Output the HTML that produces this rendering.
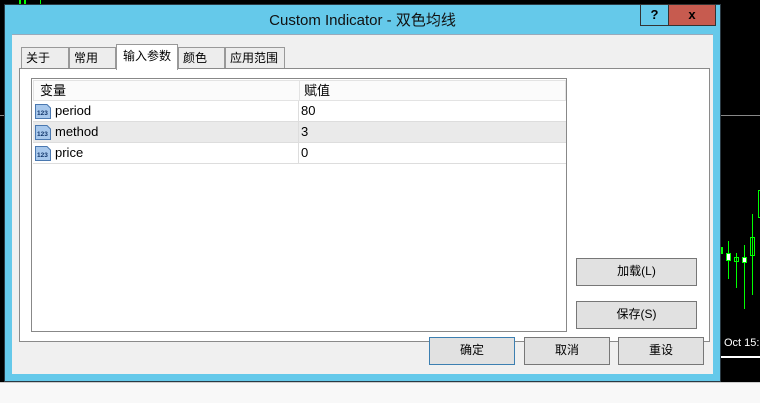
<!DOCTYPE html>
<html><head><meta charset="utf-8"><style>
*{margin:0;padding:0;box-sizing:border-box}
body{width:760px;height:403px;background:#000;position:relative;overflow:hidden;font-family:"Liberation Sans","Noto Sans CJK SC",sans-serif;font-size:12px;color:#000}
.a{position:absolute;white-space:nowrap}
.btn{position:absolute;background:#e1e1e1;border:1px solid #adadad;text-align:center;line-height:25px;font-size:12px}
.tab{position:absolute;background:#ededed;border:1px solid #999;border-bottom:none;line-height:20px;padding-left:4px;font-size:12px}
.row{position:absolute;left:1px;width:533px;height:21px;border-bottom:1px solid #ddd;line-height:20px;font-size:13px}
.row .n{position:absolute;left:22px}
.row .v{position:absolute;left:268px}
.row .d{position:absolute;left:265px;top:0;width:1px;height:20px;background:#ddd}
.ic{position:absolute;left:2px;top:3px}
.g{position:absolute;background:#0f0}
</style></head><body>
<div class="g" style="left:19px;top:0;width:2px;height:4px"></div>
<div class="g" style="left:24px;top:0;width:2px;height:4px"></div>
<div class="g" style="left:40px;top:0;width:1px;height:4px"></div>
<div class="a" style="left:0;top:115px;width:4px;height:1px;background:#888"></div>
<div class="a" style="left:720px;top:115px;width:40px;height:1px;background:#888"></div>
<div class="g" style="left:721px;top:247px;width:2px;height:7px"></div>
<div class="g" style="left:728px;top:241px;width:1px;height:38px"></div>
<div class="a" style="left:726px;top:253px;width:5px;height:8px;border:1px solid #0f0;background:#fff"></div>
<div class="g" style="left:736px;top:253px;width:1px;height:35px"></div>
<div class="a" style="left:734px;top:257px;width:5px;height:5px;border:1px solid #0f0"></div>
<div class="g" style="left:744px;top:245px;width:1px;height:64px"></div>
<div class="a" style="left:742px;top:257px;width:5px;height:6px;border:1px solid #0f0;background:#fff"></div>
<div class="g" style="left:752px;top:214px;width:1px;height:81px"></div>
<div class="a" style="left:750px;top:237px;width:5px;height:19px;border:1px solid #0f0"></div>
<div class="a" style="left:758px;top:190px;width:2px;height:28px;border:1px solid #0f0;border-right:none"></div>
<div class="a" style="left:724px;top:337px;color:#fff;font-size:11px">Oct 15:3</div>
<div class="a" style="left:721px;top:356px;width:39px;height:2px;background:#fff"></div>
<div class="a" style="left:0;top:382px;width:760px;height:21px;background:#f8f8f8;border-top:1px solid #ccc"></div>
<div class="a" style="left:4px;top:4px;width:717px;height:378px;background:#65c9ea;border:1px solid #2a3a44"></div>
<div class="a" style="left:5px;top:9px;width:715px;text-align:center;font-size:15px;color:#111">Custom Indicator - 双色均线</div>
<div class="a" style="left:640px;top:4px;width:29px;height:22px;border:1px solid #333;background:#65c9ea;text-align:center;font-weight:bold;font-size:13px;line-height:20px">?</div>
<div class="a" style="left:668px;top:4px;width:48px;height:22px;border:1px solid #333;background:#c75b4f;text-align:center;font-weight:bold;font-size:13px;line-height:20px">x</div>
<div class="a" style="left:12px;top:34px;width:701px;height:340px;background:#f0f0f0;border-top:1px solid #9ab"></div>
<div class="a" style="left:19px;top:68px;width:691px;height:274px;background:#fff;border:1px solid #8a8a8a"></div>
<div class="tab" style="left:21px;top:47px;width:48px;height:21px">关于</div>
<div class="tab" style="left:69px;top:47px;width:47px;height:21px">常用</div>
<div class="tab" style="left:178px;top:47px;width:47px;height:21px">颜色</div>
<div class="tab" style="left:225px;top:47px;width:60px;height:21px">应用范围</div>
<div class="tab" style="left:116px;top:44px;width:62px;height:26px;background:#fff;line-height:22px;padding-left:6px">输入参数</div>
<div class="a" style="left:31px;top:78px;width:536px;height:254px;background:#fff;border:1px solid #888">
  <div class="row" style="top:1px;height:21px;background:#fbfbfb;border:1px solid #e3e3e3;line-height:19px"><span class="a" style="left:6px">变量</span><span class="d" style="left:265px;background:#e3e3e3;height:19px"></span><span class="a" style="left:270px">赋值</span></div>
  <div class="row" style="top:22px;background:#fff"><svg class="ic" width="16" height="15" viewBox="0 0 16 15"><path d="M0.5 0.5H12l3.5 3.5V14.5H0.5Z" fill="#a8c8ec" stroke="#4a78b0"/><text x="2" y="11" font-size="6.5" font-weight="bold" fill="#12366b" font-family="Liberation Sans">123</text></svg><span class="n">period</span><span class="d"></span><span class="v">80</span></div>
  <div class="row" style="top:43px;background:#eaeaea"><svg class="ic" width="16" height="15" viewBox="0 0 16 15"><path d="M0.5 0.5H12l3.5 3.5V14.5H0.5Z" fill="#a8c8ec" stroke="#4a78b0"/><text x="2" y="11" font-size="6.5" font-weight="bold" fill="#12366b" font-family="Liberation Sans">123</text></svg><span class="n">method</span><span class="d"></span><span class="v">3</span></div>
  <div class="row" style="top:64px;background:#fff"><svg class="ic" width="16" height="15" viewBox="0 0 16 15"><path d="M0.5 0.5H12l3.5 3.5V14.5H0.5Z" fill="#a8c8ec" stroke="#4a78b0"/><text x="2" y="11" font-size="6.5" font-weight="bold" fill="#12366b" font-family="Liberation Sans">123</text></svg><span class="n">price</span><span class="d"></span><span class="v">0</span></div>
</div>
<div class="btn" style="left:576px;top:258px;width:121px;height:28px;border-color:#777">加载(L)</div>
<div class="btn" style="left:576px;top:301px;width:121px;height:28px;border-color:#777">保存(S)</div>
<div class="btn" style="left:429px;top:337px;width:86px;height:28px;border-color:#3c7fb1">确定</div>
<div class="btn" style="left:524px;top:337px;width:86px;height:28px;border-color:#777">取消</div>
<div class="btn" style="left:618px;top:337px;width:86px;height:28px;border-color:#777">重设</div>
</body></html>
